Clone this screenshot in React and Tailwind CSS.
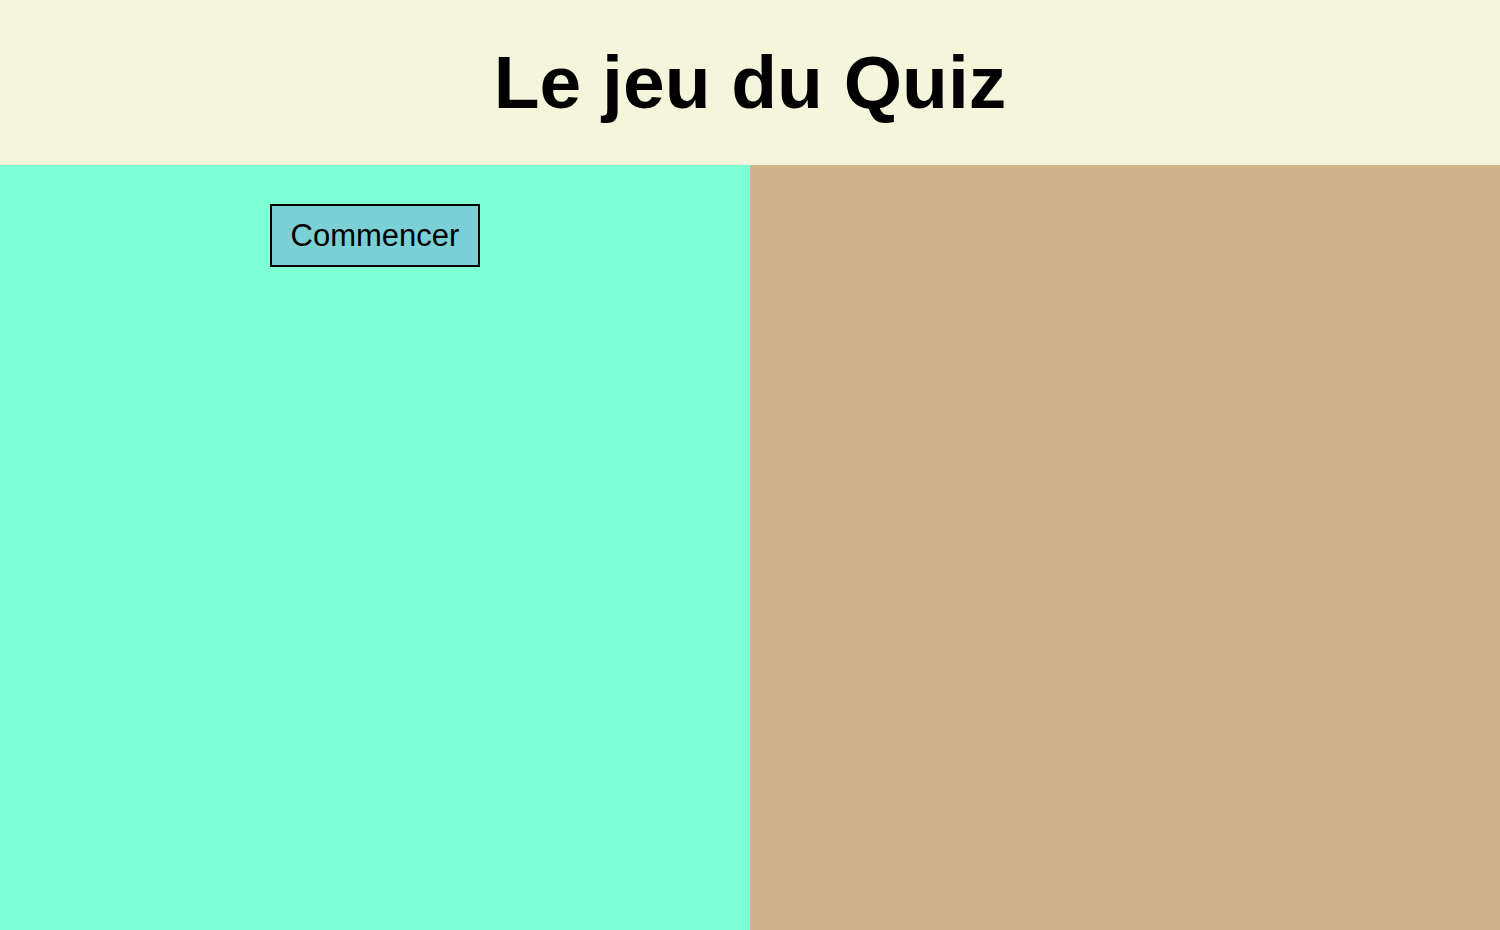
export default function App() {
    return (
        <div className="h-screen flex flex-col font-['Liberation_Sans',Arial,sans-serif]">
            {/* Header */}
            <header className="h-[165px] shrink-0 bg-[#f5f5dc] flex items-center justify-center">
                <h1 className="text-[75px] font-bold text-black leading-normal">Le jeu du Quiz</h1>
            </header>

            {/* Two panels */}
            <div className="flex flex-1">
                <div className="w-1/2 bg-[#7fffd4] flex justify-center items-start pt-[39px]">
                    <button className="w-[210px] h-[63px] border-2 border-black bg-[#7ad0d5] text-[31px] text-black leading-none">
                        Commencer
                    </button>
                </div>
                <div className="w-1/2 bg-[#d2b48c]"></div>
            </div>
        </div>
    );
}
